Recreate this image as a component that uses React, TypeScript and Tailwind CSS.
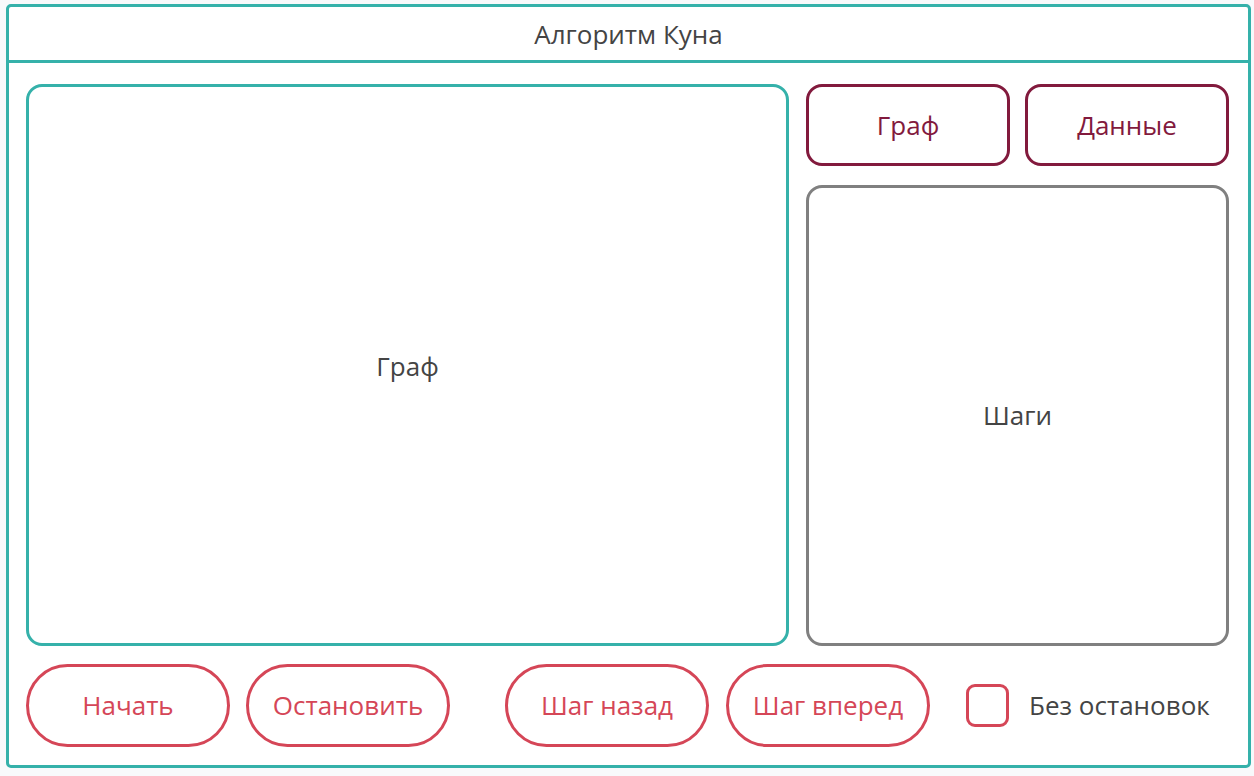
// Kuhn's algorithm visualizer layout
const teal = 'border-[#35b1aa]';

const PillButton = ({ label, className = '' }: { label: string; className?: string }) => (
  <button
    className={`h-[83px] w-[204px] rounded-full border-[3px] border-[#d54657] bg-white text-[26px] text-[#d54657] ${className}`}
  >
    {label}
  </button>
);

const TabButton = ({ label }: { label: string }) => (
  <button className="h-[82px] w-[204px] rounded-[16px] border-[3px] border-[#821a3d] bg-white text-[26px] text-[#821a3d]">
    {label}
  </button>
);

export default function App() {
  return (
    <div
      className="h-[776px] w-[1254px] bg-[#f8f9fb] pl-[6px] pt-[4px] text-[#444]"
      style={{ fontFamily: '"Open Sans", "Noto Sans", sans-serif' }}
    >
      <div className={`flex h-[764px] w-[1245px] flex-col rounded-[5px] border-[3px] ${teal} bg-white`}>
        {/* Header */}
        <div className={`flex h-[56px] items-center justify-center border-b-[3px] ${teal} pt-[2px] text-[26px]`}>
          Алгоритм Куна
        </div>

        {/* Content */}
        <div className="flex flex-1 flex-col pl-[17px] pr-[19px] pt-[21px]">
          <div className="flex h-[562px] gap-[17px]">
            <div className={`flex w-[763px] items-center justify-center rounded-[16px] border-[3px] ${teal} pt-[2px] text-[26px]`}>
              Граф
            </div>
            <div className="flex w-[423px] flex-col gap-[19px]">
              <div className="flex justify-between">
                <TabButton label="Граф" />
                <TabButton label="Данные" />
              </div>
              <div className="flex flex-1 items-center justify-center rounded-[16px] border-[3px] border-[#808080] text-[26px]">
                Шаги
              </div>
            </div>
          </div>

          {/* Controls */}
          <div className="mt-[18px] flex items-center">
            <PillButton label="Начать" />
            <PillButton label="Остановить" className="ml-[16px] w-[203px]" />
            <PillButton label="Шаг назад" className="ml-[55px] w-[203px]" />
            <PillButton label="Шаг вперед" className="ml-[17px]" />
            <label className="ml-[36px] flex items-center gap-[20px] text-[26px]">
              <span className="block h-[43px] w-[43px] rounded-[9px] border-[3px] border-[#d54657]" />
              Без остановок
            </label>
          </div>
        </div>
      </div>
    </div>
  );
}
